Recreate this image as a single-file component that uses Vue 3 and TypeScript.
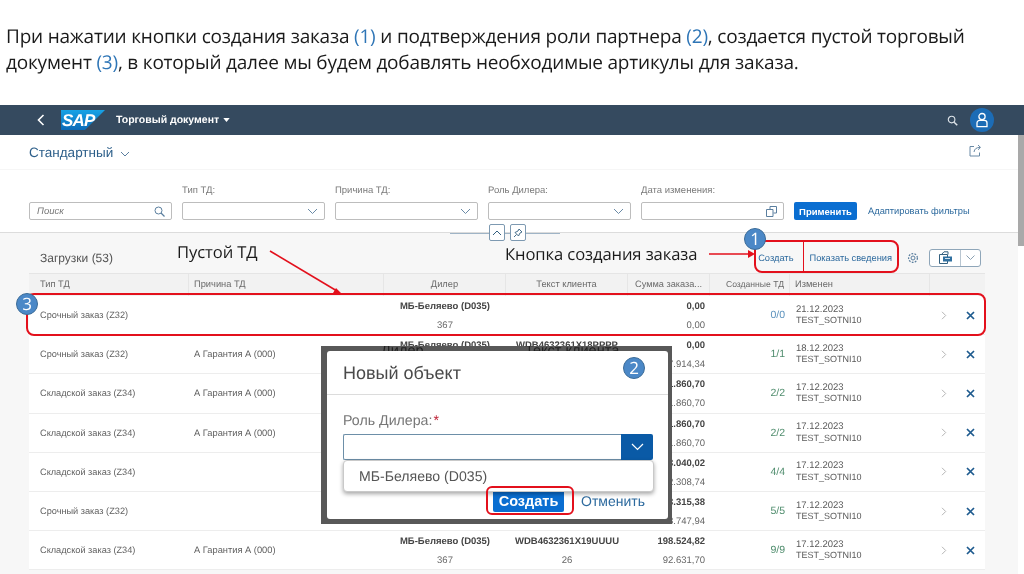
<script setup lang="ts">
interface Row {
  type: string
  reason: string
  dealer: string
  dealerNo: string
  text: string
  textNo: string
  sum: string
  sum2: string
  count: string
  date: string
}
const d = 'МБ-Беляево (D035)'
const rows: Row[] = [
  { type: 'Срочный заказ (Z32)', reason: '', dealer: d, dealerNo: '367', text: '', textNo: '', sum: '0,00', sum2: '0,00', count: '0/0', date: '21.12.2023' },
  { type: 'Срочный заказ (Z32)', reason: 'А Гарантия А (000)', dealer: d, dealerNo: '367', text: 'WDB4632361X18PPPP', textNo: '1', sum: '0,00', sum2: '7.914,34', count: '1/1', date: '18.12.2023' },
  { type: 'Складской заказ (Z34)', reason: 'А Гарантия А (000)', dealer: d, dealerNo: '367', text: '', textNo: '', sum: '1.860,70', sum2: '1.860,70', count: '2/2', date: '17.12.2023' },
  { type: 'Складской заказ (Z34)', reason: 'А Гарантия А (000)', dealer: d, dealerNo: '367', text: '', textNo: '', sum: '1.860,70', sum2: '1.860,70', count: '2/2', date: '17.12.2023' },
  { type: 'Складской заказ (Z34)', reason: '', dealer: d, dealerNo: '367', text: '', textNo: '', sum: '3.040,02', sum2: '2.308,74', count: '4/4', date: '17.12.2023' },
  { type: 'Срочный заказ (Z32)', reason: '', dealer: d, dealerNo: '367', text: '', textNo: '', sum: '3.315,38', sum2: '8.747,94', count: '5/5', date: '17.12.2023' },
  { type: 'Складской заказ (Z34)', reason: 'А Гарантия А (000)', dealer: d, dealerNo: '367', text: 'WDB4632361X19UUUU', textNo: '26', sum: '198.524,82', sum2: '92.631,70', count: '9/9', date: '17.12.2023' }
]
const heads = ['Тип ТД', 'Причина ТД', 'Дилер', 'Текст клиента', 'Сумма заказа...', 'Созданные ТД', 'Изменен', '']
const filters = [
  { label: 'Тип ТД:', icon: 'down' },
  { label: 'Причина ТД:', icon: 'down' },
  { label: 'Роль Дилера:', icon: 'down' },
  { label: 'Дата изменения:', icon: 'copy' }
]
</script>

<template>
  <div class="page">
    <div class="caption">
      <p>При нажатии кнопки создания заказа <span class="ref">(1)</span> и подтверждения роли партнера <span class="ref">(2)</span>, создается пустой торговый</p>
      <p>документ <span class="ref">(3)</span>, в который далее мы будем добавлять необходимые артикулы для заказа.</p>
    </div>

    <div class="shell">
      <svg class="back" width="10" height="14" viewBox="0 0 10 14"><path d="M7.500 2 2.500 7l5 5" fill="none" stroke="#fff" stroke-width="1.600"/></svg>
      <svg class="logo" width="44" height="20" viewBox="0 0 44 20">
        <defs><linearGradient id="sapg" x1="0" y1="0" x2="0" y2="1"><stop offset="0" stop-color="#17a3e6"/><stop offset="1" stop-color="#0a6ab8"/></linearGradient></defs>
        <path d="M0 0h44L24 20H0z" fill="url(#sapg)"/>
        <text x="1" y="16" class="logo-text">SAP</text>
      </svg>
      <span class="app-title">Торговый документ</span>
      <svg class="caret" width="7" height="4" viewBox="0 0 8 5"><path d="M0 0h8L4 5z" fill="#fff"/></svg>
      <svg class="shell-search" width="11" height="11" viewBox="0 0 12 12"><circle cx="5" cy="5" r="3.600" fill="none" stroke="#dfe5ea" stroke-width="1.200"/><path d="m7.800 7.800 3.400 3.400" stroke="#dfe5ea" stroke-width="1.600"/></svg>
      <span class="avatar">
        <svg width="14" height="16" viewBox="0 0 14 16"><circle cx="7" cy="4.600" r="3.100" fill="none" stroke="#fff" stroke-width="1.300"/><path d="M2 14.600V11a2.600 2.600 0 0 1 2.600-2.600h4.800A2.600 2.600 0 0 1 12 11v3.600z" fill="none" stroke="#fff" stroke-width="1.300"/></svg>
      </span>
    </div>

    <div class="main">
      <div class="view-head">
        <span class="view-name">Стандартный</span>
        <svg class="view-caret" width="10" height="6" viewBox="0 0 10 6"><path d="m1 1 4 4 4-4" fill="none" stroke="#5b7f9f" stroke-width="1"/></svg>
        <svg class="share" width="13" height="13" viewBox="0 0 13 13"><path d="M5 2.500H1v9.500h9.500V8.500M5 8c.4-3 2.400-4.600 6-4.600M9 1l2.500 2.400L9 5.800" fill="none" stroke="#6a8aa6" stroke-width="1"/></svg>
      </div>

      <div class="filters">
        <div class="filter">
          <span class="f-label"></span>
          <div class="f-input">
            <i class="placeholder">Поиск</i>
            <svg width="11" height="11" viewBox="0 0 11 11"><circle cx="4.500" cy="4.500" r="3.500" fill="none" stroke="#5b7f9f"/><path d="m7 7 3.500 3.500" stroke="#5b7f9f" stroke-width="1.300"/></svg>
          </div>
        </div>
        <div v-for="f in filters" :key="f.label" class="filter">
          <span class="f-label">{{ f.label }}</span>
          <div class="f-input">
            <span></span>
            <svg v-if="f.icon === 'down'" width="11" height="7" viewBox="0 0 11 7"><path d="m1 1 4.500 4.500L10 1" fill="none" stroke="#6a8aa6"/></svg>
            <svg v-else width="11" height="11" viewBox="0 0 11 11"><path d="M4 3V.5h6.500v6.500H7.500M.5 3.500h6.500v7H.5z" fill="none" stroke="#5b7f9f"/></svg>
          </div>
        </div>
        <button class="apply">Применить</button>
        <span class="adapt">Адаптировать фильтры</span>
      </div>

      <div class="content">
        <div class="tbar">
          <span class="count-title">Загрузки (53)</span>
          <span class="act act-create">Создать</span>
          <span class="act act-show">Показать сведения</span>
          <svg class="gear" width="12" height="12" viewBox="0 0 12 12"><circle cx="6" cy="6" r="2" fill="none" stroke="#5b7f9f"/><circle cx="6" cy="6" r="4.400" fill="none" stroke="#5b7f9f" stroke-width="1.300" stroke-dasharray="1.800 1.300"/></svg>
          <div class="export">
            <span class="exp-main"><svg width="16" height="13" viewBox="0 0 16 13"><path d="M4.500 3.500 7 .8h4v2.700M2.500 3.500h8v9h-8z" fill="#fff" stroke="#34607f"/><path d="M6 5.500h9v5H6z" fill="#2f6f9f"/><path d="M8 7.500h5" stroke="#cfe0ec"/></svg></span>
            <span class="exp-more"><svg width="9" height="5" viewBox="0 0 9 5"><path d="m.5.5 4 4 4-4" fill="none" stroke="#8aa0b2"/></svg></span>
          </div>
        </div>

        <div class="grid head">
          <span v-for="(h, i) in heads" :key="i" class="hcell" :class="'c' + i">{{ h }}</span>
        </div>
        <div v-for="(r, i) in rows" :key="i" class="grid row">
          <span class="cell c0">{{ r.type }}</span>
          <span class="cell c1">{{ r.reason }}</span>
          <span class="cell c2 two"><b>{{ r.dealer }}</b><span>{{ r.dealerNo }}</span></span>
          <span class="cell c3 two"><b>{{ r.text }}</b><span>{{ r.textNo }}</span></span>
          <span class="cell c4 two"><b>{{ r.sum }}</b><span>{{ r.sum2 }}</span></span>
          <span class="cell c5" :class="i === 0 ? 'zero' : 'ok'">{{ r.count }}</span>
          <span class="cell c6 changed"><span>{{ r.date }}</span><span class="user">TEST_SOTNI10</span></span>
          <span class="cell c7">
            <svg width="6" height="9" viewBox="0 0 6 9"><path d="m1 .8 3.700 3.700L1 8.200" fill="none" stroke="#b5b5b5"/></svg>
            <svg width="9" height="9" viewBox="0 0 9 9"><path d="m1 1 7 7M8 1 1 8" stroke="#1d5a8e" stroke-width="1.700"/></svg>
          </span>
        </div>
      </div>
    </div>

    <div class="scroll-thumb"></div>

    <div class="collapse">
      <span class="col-btn"><svg width="10" height="6" viewBox="0 0 10 6"><path d="m1 5 4-4 4 4" fill="none" stroke="#34607f"/></svg></span>
      <span class="col-btn"><svg width="10" height="10" viewBox="0 0 10 10"><path d="M6 1 9 4 7 5 5.500 8 2 4.500 5 3zM3.500 6.500 1 9" fill="none" stroke="#34607f" stroke-width=".9"/></svg></span>
    </div>

    <svg class="marks" width="1024" height="574" viewBox="0 0 1024 574">
      <g fill="none" stroke="#e3101c">
        <rect x="27" y="294" width="958" height="41" rx="7" stroke-width="2"/>
        <rect x="755" y="241" width="143" height="31" rx="7" stroke-width="2"/>
        <path d="M803.500 241v31" stroke-width="1"/>
        <path d="M270 251 337 291" stroke-width="1.600"/>
        <path d="M709 254h40" stroke-width="1.600"/>
      </g>
      <path d="m342 294-9-1 3-5zM755 254l-7-4v8z" fill="#e3101c"/>
    </svg>

    <span class="note note-empty">Пустой ТД</span>
    <span class="note note-create">Кнопка создания заказа</span>
    <span class="num num1">1</span>
    <span class="num num3">3</span>

    <div class="dialog">
      <span class="ghost ghost-a">Дилер</span>
      <span class="ghost ghost-b">Текст клиента</span>
      <div class="dlg-inner">
        <div class="dlg-head">Новый объект</div>
        <div class="dlg-body">
          <div class="dlg-label">Роль Дилера:<span class="req">*</span></div>
          <div class="dlg-input">
            <span class="dlg-field"></span>
            <span class="dlg-help"><svg width="13" height="8" viewBox="0 0 13 8"><path d="m1 1 5.500 5.500L12 1" fill="none" stroke="#fff" stroke-width="1.200"/></svg></span>
          </div>
        </div>
        <div class="dlg-foot">
          <button class="dlg-create">Создать</button>
          <span class="dlg-cancel">Отменить</span>
        </div>
      </div>
      <div class="dlg-pop">МБ-Беляево (D035)</div>
      <span class="dlg-mark"></span>
      <span class="num num2">2</span>
    </div>
  </div>
</template>

<style>
html, body { margin: 0; padding: 0; background: #fff; }
</style>

<style scoped>
.page {
  position: relative;
  width: 1024px;
  height: 574px;
  overflow: hidden;
  background: #fff;
  font-family: "Liberation Sans", Arial, sans-serif;
  color: #4d4d4d;
  text-rendering: geometricPrecision;
  filter: blur(0.35px);
}
.caption {
  height: 105px;
  box-sizing: border-box;
  padding: 23px 0 0 6px;
  font-family: "Open Sans", sans-serif;
  font-size: 19px;
  letter-spacing: -0.2px;
  line-height: 26px;
  color: #1a1a1a;
  white-space: nowrap;
}
.caption p { margin: 0; }
.ref { color: #2e75b6; }

.shell {
  height: 30px;
  background: #354a5f;
  display: flex;
  align-items: center;
  color: #fff;
}
.back { margin-left: 36px; }
.logo { margin-left: 15px; }
.logo-text { font: italic bold 17px "Liberation Sans", sans-serif; fill: #fff; letter-spacing: -0.8px; }
.app-title { margin-left: 11px; font-size: 10.500px; font-weight: bold; }
.caret { margin-left: 4px; }
.shell-search { margin-left: auto; margin-right: 12px; }
.avatar {
  width: 24px;
  height: 24px;
  margin-right: 30px;
  border-radius: 50%;
  background: #1c6cb5;
  display: flex;
  align-items: center;
  justify-content: center;
}

.main { height: 439px; display: flex; flex-direction: column; }
.view-head {
  height: 35px;
  padding: 0 42px 0 29px;
  display: flex;
  align-items: center;
  border-bottom: 1px solid #f6f6f6;
  box-sizing: border-box;
}
.view-name { font-size: 13.500px; color: #2d5f8a; }
.view-caret { margin-left: 7px; margin-top: 3px; }
.share { margin-left: auto; margin-top: -4px; }

.filters {
  height: 63px;
  box-sizing: border-box;
  padding: 0 0 12px 29px;
  display: flex;
  align-items: flex-end;
  gap: 10px;
  border-bottom: 1px solid #dcdcdc;
}
.filter { width: 143px; display: flex; flex-direction: column; gap: 6px; }
.f-label { height: 11px; font-size: 9.500px; line-height: 11px; color: #7a7a7a; }
.f-input {
  height: 18px;
  box-sizing: border-box;
  padding: 0 6px 0 7px;
  border: 1px solid #bdbdbd;
  border-radius: 2px;
  background: #fff;
  display: flex;
  align-items: center;
  justify-content: space-between;
}
.placeholder { font-size: 9.500px; color: #777; }
.apply {
  width: 63px;
  height: 18px;
  padding: 0;
  border: 0;
  border-radius: 2px;
  background: #0a6ed1;
  color: #fff;
  font: bold 9.500px "Liberation Sans", sans-serif;
}
.adapt { margin-left: 1px; height: 18px; line-height: 18px; font-size: 9.300px; color: #2d6a9e; }

.content {
  flex: 1;
  margin-right: 6px;
  padding: 0 33px 0 29px;
  background: #f7f7f7;
  overflow: hidden;
}
.tbar { height: 40px; position: relative; display: flex; align-items: center; }
.count-title { margin-left: 11px; margin-top: 9px; font-size: 12px; color: #555; }
.act { font-size: 9.300px; color: #2d6a9e; margin-top: 9px; }
.act-create { margin-left: auto; }
.act-show { margin-left: 16px; }
.gear { margin-left: 15px; margin-top: 9px; }
.export {
  margin-left: 10px;
  margin-right: 4px;
  margin-top: 9px;
  width: 52px;
  height: 18px;
  box-sizing: border-box;
  display: flex;
  border: 1px solid #8fa6b9;
  border-radius: 3px;
  background: #fff;
}
.exp-main { width: 30px; display: flex; align-items: center; justify-content: center; border-right: 1px solid #b9c6d1; }
.exp-more { flex: 1; display: flex; align-items: center; justify-content: center; }

.grid {
  display: grid;
  grid-template-columns: 160px 195px 122px 122px 82px 80px 140px 55px;
}
.head { height: 23px; background: #f2f2f2; border-top: 1px solid #e5e5e5; box-sizing: border-box; }
.hcell {
  font-size: 9.300px;
  line-height: 21px;
  color: #6a6a6a;
  border-right: 1px solid #e6e6e6;
  padding: 0 5px;
  white-space: nowrap;
  overflow: hidden;
}
.hcell.c0 { padding-left: 11px; }
.hcell.c2, .hcell.c3 { text-align: center; }
.hcell.c4, .hcell.c5 { text-align: right; }
.hcell.c4 { padding-right: 7px; font-size: 9.200px; }
.hcell.c5 { font-size: 8.600px; }
.hcell.c7 { border-right: 0; }
.row { height: 39.200px; background: #fff; border-bottom: 1px solid #ededed; box-sizing: border-box; }
.cell {
  font-size: 9.500px;
  color: #5f5f5f;
  padding: 0 5px;
  display: flex;
  align-items: center;
  white-space: nowrap;
}
.cell.c0 { padding-left: 11px; font-size: 9.200px; }
.cell.c1 { font-size: 9.300px; }
.two { flex-direction: column; justify-content: center; gap: 8px; align-items: center; line-height: 11px; padding-top: 2px; }
.two b { color: #444; min-height: 11px; }
.two span { min-height: 11px; color: #666; }
.c4.two { align-items: flex-end; }
.c5 { justify-content: flex-end; font-size: 10.500px; }
.zero { color: #5c92bd; }
.ok { color: #4e8c6c; }
.changed { flex-direction: column; align-items: flex-start; justify-content: center; font-size: 9.500px; line-height: 11.500px; color: #5a5a5a; padding-left: 6px; }
.user { font-size: 9px; }
.c7 { padding: 0 10px 0 11px; justify-content: space-between; }

.scroll-thumb {
  position: absolute;
  right: 0;
  top: 135px;
  width: 6px;
  height: 111px;
  background: #a9a9a9;
}
.collapse {
  position: absolute;
  left: 450px;
  top: 224px;
  width: 110px;
  height: 18px;
  box-sizing: border-box;
  padding-left: 39px;
  display: flex;
  gap: 5px;
  background: linear-gradient(#0000 9px, #9fb4c6 9px, #9fb4c6 10px, #0000 10px);
}
.col-btn {
  width: 16px;
  height: 17px;
  box-sizing: border-box;
  border: 1px solid #7d99b1;
  border-radius: 2px;
  background: #fff;
  display: flex;
  align-items: center;
  justify-content: center;
}

.marks { position: absolute; left: 0; top: 0; pointer-events: none; }
.note { position: absolute; font-family: "Open Sans", sans-serif; font-size: 16.600px; color: #1a1a1a; white-space: nowrap; line-height: 20px; letter-spacing: -0.1px; }
.note-empty { left: 177px; top: 242px; }
.note-create { left: 505px; top: 244px; }
.num {
  position: absolute;
  width: 22px;
  height: 22px;
  border-radius: 50%;
  box-sizing: border-box;
  border: 1px solid #3c6c98;
  background: #4b88c7;
  color: #fff;
  font-family: "Open Sans", sans-serif;
  font-size: 17px;
  line-height: 20px;
  text-align: center;
}
.num1 { left: 744px; top: 228px; }
.num3 { left: 16px; top: 293px; }

.dialog {
  position: absolute;
  left: 321px;
  top: 346px;
  width: 351px;
  height: 178px;
  box-sizing: border-box;
  padding: 5px 4px 5px 6px;
  background: #585858;
  overflow: hidden;
}
.ghost { position: absolute; top: -3px; font-size: 14.500px; line-height: 17px; color: #222; white-space: nowrap; }
.ghost-a { left: 60px; }
.ghost-b { left: 204px; }
.dlg-inner {
  position: relative;
  height: 100%;
  background: #fff;
  border-radius: 3px;
  display: flex;
  flex-direction: column;
}
.dlg-head {
  height: 44px;
  box-sizing: border-box;
  padding-left: 16px;
  border-bottom: 1px solid #dcdcdc;
  font-size: 18px;
  line-height: 44px;
  color: #4a4a4a;
}
.dlg-body { padding: 17px 15px 0 16px; flex: 1; }
.dlg-label { font-size: 14.200px; line-height: 18px; color: #777; }
.req { color: #c0283c; margin-left: 1px; }
.dlg-input { margin-top: 4px; height: 26px; display: flex; }
.dlg-field { flex: 1; box-sizing: border-box; border: 1px solid #6d8fa8; border-right: 0; background: #fff; border-radius: 2px 0 0 2px; }
.dlg-help { width: 32px; background: #0a5aa6; border-radius: 0 2px 2px 0; display: flex; align-items: center; justify-content: center; }
.dlg-foot { height: 29px; padding: 0 23px 0 166px; display: flex; align-items: flex-start; gap: 17px; }
.dlg-create {
  width: 72px;
  height: 22px;
  padding: 0;
  border: 0;
  border-radius: 2px;
  background: #0a6ed1;
  color: #fff;
  font: bold 14.500px "Liberation Sans", sans-serif;
}
.dlg-cancel { font-size: 14px; line-height: 22px; color: #2d6a9e; }
.dlg-pop {
  position: absolute;
  left: 22px;
  top: 114px;
  width: 311px;
  height: 32px;
  box-sizing: border-box;
  padding-left: 15px;
  border: 1px solid #c9c9c9;
  border-radius: 4px;
  background: #fff;
  box-shadow: 0 2px 4px rgba(0, 0, 0, 0.35);
  font-size: 14.100px;
  line-height: 30px;
  color: #555;
}
.dlg-mark {
  position: absolute;
  left: 165px;
  top: 140px;
  width: 88px;
  height: 29px;
  box-sizing: border-box;
  border: 2px solid #e3101c;
  border-radius: 6px;
}
.num2 { left: 302px; top: 11px; }
</style>
